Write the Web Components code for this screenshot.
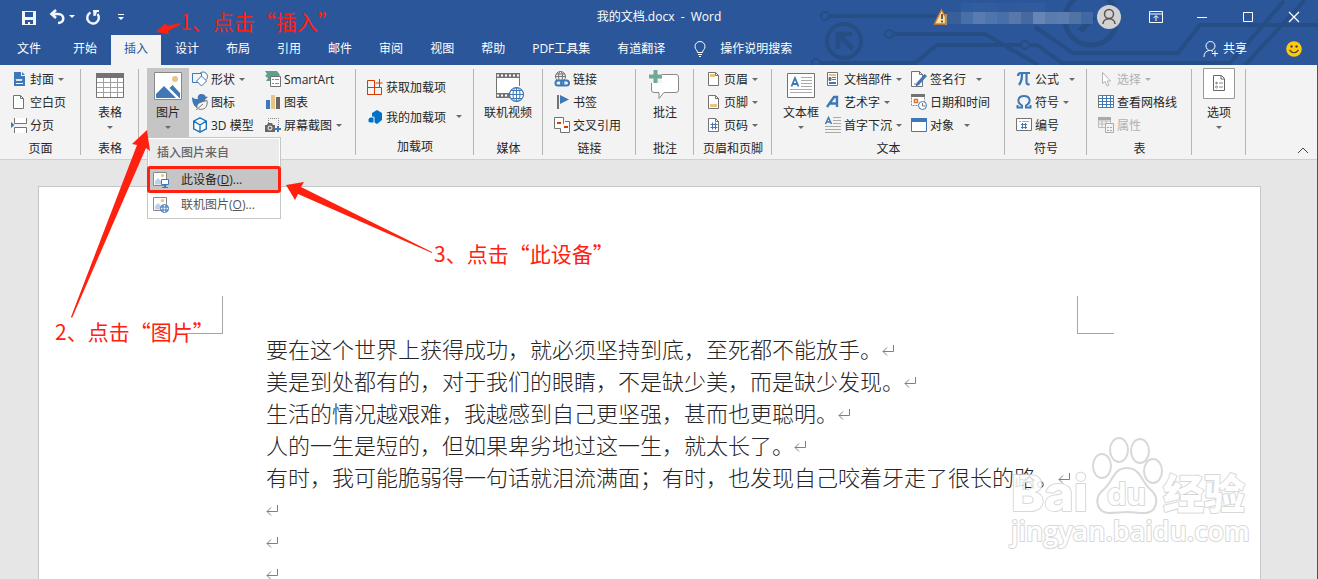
<!DOCTYPE html>
<html lang="zh-CN">
<head>
<meta charset="utf-8">
<title>我的文档.docx - Word</title>
<style>
    body {
        margin: 0;
        overflow: hidden;
        font: 12px/16px "Open Sans", "Noto Sans CJK SC", sans-serif;
        color: #262626;
    }
</style>
</head>
<body>
<word-window>
    <title-bar slot="title">我的文档.docx  -  Word</title-bar>
    <tab-strip slot="tabs" active="插入"></tab-strip>

    <ribbon-bar slot="ribbon">
        <ribbon-group label="页面" style="--width: 81px; --pad: 11px">
            <ribbon-column>
                <ribbon-button icon="cover" caret>封面</ribbon-button>
                <ribbon-button icon="blank">空白页</ribbon-button>
                <ribbon-button icon="break">分页</ribbon-button>
            </ribbon-column>
        </ribbon-group>
        <ribbon-group label="表格" style="--width: 58px">
            <ribbon-button large icon="table" caret>表格</ribbon-button>
        </ribbon-group>
        <ribbon-group style="--width: 217px">
            <ribbon-button large pressed icon="picture" caret>图片
                <picture-menu slot="menu"></picture-menu>
            </ribbon-button>
            <ribbon-column style="--column: 70px">
                <ribbon-button icon="shapes" caret>形状</ribbon-button>
                <ribbon-button icon="icons">图标</ribbon-button>
                <ribbon-button icon="cube">3D 模型</ribbon-button>
            </ribbon-column>
            <ribbon-column>
                <ribbon-button icon="smartart">SmartArt</ribbon-button>
                <ribbon-button icon="chart">图表</ribbon-button>
                <ribbon-button icon="screenshot" caret>屏幕截图</ribbon-button>
            </ribbon-column>
        </ribbon-group>
        <ribbon-group label="加载项" style="--width: 118px; --pad: 11px">
            <ribbon-column style="--row: 30px; --top: 4px">
                <ribbon-button icon="store">获取加载项</ribbon-button>
                <ribbon-button icon="addins" caret="far">我的加载项</ribbon-button>
            </ribbon-column>
        </ribbon-group>
        <ribbon-group label="媒体" style="--width: 69px; --pad: 10px">
            <ribbon-button large icon="video">联机视频</ribbon-button>
        </ribbon-group>
        <ribbon-group label="链接" style="--width: 93px; --pad: 11px">
            <ribbon-column>
                <ribbon-button icon="link">链接</ribbon-button>
                <ribbon-button icon="bookmark">书签</ribbon-button>
                <ribbon-button icon="crossref">交叉引用</ribbon-button>
            </ribbon-column>
        </ribbon-group>
        <ribbon-group label="批注" style="--width: 58px">
            <ribbon-button large icon="comment">批注</ribbon-button>
        </ribbon-group>
        <ribbon-group label="页眉和页脚" style="--width: 78px; --pad: 11px">
            <ribbon-column>
                <ribbon-button icon="header" caret>页眉</ribbon-button>
                <ribbon-button icon="footer" caret>页脚</ribbon-button>
                <ribbon-button icon="pagenum" caret>页码</ribbon-button>
            </ribbon-column>
        </ribbon-group>
        <ribbon-group label="文本" style="--width: 233px">
            <ribbon-button large icon="textbox" caret>文本框</ribbon-button>
            <ribbon-column style="--column: 83px">
                <ribbon-button icon="parts" caret>文档部件</ribbon-button>
                <ribbon-button icon="wordart" caret>艺术字</ribbon-button>
                <ribbon-button icon="dropcap" caret>首字下沉</ribbon-button>
            </ribbon-column>
            <ribbon-column>
                <ribbon-button icon="signature" caret="far">签名行</ribbon-button>
                <ribbon-button icon="datetime">日期和时间</ribbon-button>
                <ribbon-button icon="object" caret="far">对象</ribbon-button>
            </ribbon-column>
        </ribbon-group>
        <ribbon-group label="符号" style="--width: 82px; --pad: 11px">
            <ribbon-column>
                <ribbon-button icon="pi" caret="far">公式</ribbon-button>
                <ribbon-button icon="omega" caret>符号</ribbon-button>
                <ribbon-button icon="number">编号</ribbon-button>
            </ribbon-column>
        </ribbon-group>
        <ribbon-group label="表" style="--width: 105px; --pad: 11px">
            <ribbon-column>
                <ribbon-button icon="select" caret disabled>选择</ribbon-button>
                <ribbon-button icon="grid">查看网格线</ribbon-button>
                <ribbon-button icon="props" disabled>属性</ribbon-button>
            </ribbon-column>
        </ribbon-group>
        <ribbon-group style="--width: 54px; --pad: 6px">
            <ribbon-button large icon="options" caret>选项</ribbon-button>
        </ribbon-group>
    </ribbon-bar>

    <document-page slot="document">
        <p>要在这个世界上获得成功，就必须坚持到底，至死都不能放手。</p>
        <p>美是到处都有的，对于我们的眼睛，不是缺少美，而是缺少发现。</p>
        <p>生活的情况越艰难，我越感到自己更坚强，甚而也更聪明。</p>
        <p>人的一生是短的，但如果卑劣地过这一生，就太长了。</p>
        <p>有时，我可能脆弱得一句话就泪流满面；有时，也发现自己咬着牙走了很长的路。</p>
        <p></p>
        <p></p>
        <p></p>
    </document-page>
</word-window>
<site-watermark></site-watermark>
<callout-layer></callout-layer>

<script>
const BLUE = '#3f78b5';
const GRAY = '#737373';
const SAND = '#eac282';

const sheet = (inner) => `<path d="M3.5 1.5h7l3 3v10h-10z" fill="#fff" stroke="${GRAY}"/><path d="M10.5 1.5v3h3" fill="none" stroke="${GRAY}"/>${inner}`;
const photo = `<path d="M.5.5h13v13H.5z" fill="#fff" stroke="#8a8a8a"/><circle cx="9.500" cy="3.500" r="1.600" fill="${SAND}"/><path d="M2 12.500V9l3-3 3 3v3.500z" fill="#bcd0e6"/>`;

// [size, markup]
const ICONS = {
    cover: [16, `<path d="M3 1h7v4h4v10H3zM11 1l3 3h-3z" fill="${BLUE}"/><path d="M5 8l1 2 1-2 1 2 1-2 1 2 1-2M5 12.500h7" fill="none" stroke="#fff"/>`],
    blank: [16, `<path d="M2.500 1.500h7l3 3v10h-10z" fill="#fff" stroke="${GRAY}"/><path d="M9.500 1.500v3h3" fill="none" stroke="${GRAY}"/>`],
    break: [16, `<path d="M3.500 1v5.500h12V1M3.500 16v-5.500h12V16" fill="#fff" stroke="${GRAY}"/><path d="M0 5l3.500 3L0 11z" fill="${BLUE}"/>`],
    shapes: [16, `<circle cx="11" cy="5.500" r="4.500" fill="#fff" stroke="${BLUE}"/><path d="M.5 2.500h9v9h-9z" fill="#f3f3f3" stroke="${BLUE}"/><path d="M9.500 5l5 5-5 5-5-5z" fill="#fff" stroke="${BLUE}"/>`],
    icons: [16, `<path d="M0 3c2 2 4 2 6 2-1-3 1-5 3.500-5C12 0 13 1 13.500 2.500L16 3l-2.500 2c-.5 3-2.500 4-5 5l-3 4C2 13 0 8 0 3z" fill="${BLUE}"/><path d="M5 14c-1-5 4-6 10-7.500 1 6.500-2.500 10-8.500 8.500M4 16l7-6" fill="#f3f3f3" stroke="${GRAY}"/>`],
    cube: [16, '<path d="M8 .8l6.300 3.400v7.600L8 15.200l-6.300-3.400V4.200zM1.700 4.200L8 8l6.300-3.800M8 8v7" fill="#fff" stroke="#1a75bb" stroke-width="1.400"/>'],
    smartart: [16, `<path d="M0 0h12l3 4-2 2H6v4H1l2-3-3-2 2-2z" fill="#5fa08a"/><path d="M5.500 5.500h10v10h-10z" fill="#fff" stroke="${GRAY}"/><path d="M7 8.500h2m1 0h4M7 12.500h2m1 0h4" stroke="#8a8a8a"/>`],
    chart: [16, `<path d="M1 6h4v9H1z" fill="${BLUE}"/><path d="M6 1h4v14H6z" fill="${SAND}"/><path d="M11 3h4v12h-4z" fill="#666"/>`],
    screenshot: [16, `<path d="M3.500 6V1.500h10V9" fill="none" stroke="#888" stroke-dasharray="1 1"/><path d="M0 8h2l1-2h4l1 2h2v7H0z" fill="#666"/><circle cx="5" cy="11" r="2" fill="#666" stroke="#fff"/><path d="M13 9v6M10 12h6" stroke="${BLUE}" stroke-width="2"/>`],
    store: [16, '<path d="M.5 1.500h7v14h-7zM.5 8.500h14v7H.5z" fill="none" stroke="#d83b01"/><path d="M12.500 0v8M8.500 4h7" stroke="#d83b01"/>'],
    addins: [16, '<path d="M10 1l5 3v7l-5 4-5-3V4z" fill="#0072c6"/><path d="M3 8h4v6H3l-2-1v-3z" fill="#0072c6" stroke="#f3f3f3"/>'],
    link: [16, `<g fill="none" stroke="${GRAY}"><circle cx="6.500" cy="5.500" r="5"/><ellipse cx="6.500" cy="5.500" rx="2" ry="5"/><path d="M1 5.500h11M2 3h9"/></g><path d="M0 9h16v7H0z" fill="#f3f3f3"/><rect x="1.500" y="9.500" width="8" height="5" rx="2.500" fill="none" stroke="${BLUE}" stroke-width="2"/><rect x="7" y="9.500" width="8" height="5" rx="2.500" fill="none" stroke="${BLUE}" stroke-width="2"/>`],
    bookmark: [16, `<path d="M3 1h2v14H3z" fill="${GRAY}"/><path d="M6 1l9 4.500L6 10z" fill="${BLUE}"/>`],
    crossref: [16, `<path d="M.5.5h9v11h-9z" fill="#fff" stroke="${GRAY}"/><path d="M11 4.500h4.500v11h-9V12" fill="#fff" stroke="${GRAY}"/><path d="M3 5h4v2H3zM10 9h4v2h-4z" fill="#d83b01"/>`],
    header: [16, sheet(`<path d="M5 3h5v3H5z" fill="${SAND}"/>`)],
    footer: [16, sheet(`<path d="M5 10h7v3H5z" fill="${SAND}"/>`)],
    pagenum: [16, sheet(`<path d="M7.500 5.500v7M10.500 5.500v7M5.500 7.500h7M5.500 10.500h7" stroke="${BLUE}"/>`)],
    parts: [16, `<path d="M2.500 1.500h10v13h-10z" fill="#fff" stroke="${GRAY}"/><path d="M4 3h7v2H4z" fill="${SAND}"/><path d="M4 6.500h2v3H4zM7 6.500h4M7 8.500h4" fill="${GRAY}" stroke="${GRAY}"/><path d="M4 11h7v2H4z" fill="${BLUE}"/>`],
    wordart: [16, `<path d="M2 13L9 3h3v10M5 9.500h6" fill="none" stroke="${BLUE}" stroke-width="2.400"/>`],
    dropcap: [16, `<path d="M.5 7L3.500.5 6.500 7M2 5h3" fill="none" stroke="${BLUE}" stroke-width="1.500"/><path d="M8 .5h8M8 3.500h8M8 6.500h8M0 9.500h16M0 12.500h16M0 15.500h16" stroke="#aaa"/>`],
    signature: [16, `<path d="M.5.5h8l3 3v12H.5z" fill="#fff" stroke="${GRAY}"/><path d="M8.500.5v3h3M3 13h2" fill="none" stroke="${GRAY}"/><path d="M13.500 3l2.500 2-8 9-3.500 1.500L5.500 12z" fill="${BLUE}"/>`],
    datetime: [16, `<path d="M.5 1.500h13v10H.5z" fill="#fff" stroke="#888" stroke-dasharray="2 1"/><path d="M0 0h14v3H0z" fill="${GRAY}"/><path d="M3.500 5.500h3v3h-3z" fill="#fff" stroke="#d87431" stroke-width="1.500"/><circle cx="11.500" cy="11.500" r="4" fill="#fff" stroke="${BLUE}"/><path d="M11.500 9v3h3" fill="none" stroke="${GRAY}"/>`],
    object: [16, `<path d="M.5 1.500h15v13H.5z" fill="#fff" stroke="${BLUE}"/><path d="M0 1h16v4H0z" fill="${BLUE}"/>`],
    pi: [16, `<path d="M2 5c0-2 1-3 3-3h9M6 2c0 5 0 8-3 12M10.500 2v9c0 2 1 3 3 2" fill="none" stroke="${BLUE}" stroke-width="2.200"/>`],
    omega: [16, `<path d="M1.500 11v2.500h4.500V11.500C0 8 2 2 8 2s8 6 2 9.500v2h4.500V11" fill="none" stroke="${BLUE}" stroke-width="2"/>`],
    number: [16, `<path d="M.5 1.500h15v12H.5z" fill="#fff" stroke="${GRAY}"/><path d="M3 4.500h2M6 4.500h7" stroke="#aaa"/><path d="M6.500 6v6M9.500 6v6M5 7.500h6M5 10.500h6" stroke="${BLUE}"/>`],
    select: [16, '<path d="M4.500 1.500v11l2.500-2 2 4.500 2-1-2-4h3.500z" fill="#fff" stroke="#b5b0b5"/>'],
    grid: [16, `<path d="M.5 1.500h15v12H.5z" fill="#fff" stroke="${GRAY}"/><path d="M1 4.500h14M1 7.500h14M1 10.500h14M4.500 2v11M8.500 2v11M12.500 2v11" stroke="${BLUE}"/>`],
    props: [16, '<path d="M.5.500h12v10H.5zM0 4h13M0 7h13M4 2v9M8 2v9" fill="none" stroke="#bbb"/><path d="M0 0h13v3H0z" fill="#aaa"/><path d="M7.500 6.500h8v9h-8z" fill="#f3f3f3" stroke="#aaa"/><path d="M9 10.500h2m1 0h2M9 13.500h2m1 0h2" stroke="#b59fb5"/>'],
    device: [16, `${photo}<path d="M8.500 7.500h7v5h-7z" fill="#fff" stroke="${BLUE}"/><path d="M11 13h2v2h2v1H9v-1h2z" fill="${BLUE}"/>`],
    online: [16, `${photo}<circle cx="11.500" cy="11.500" r="4" fill="#fff" stroke="${BLUE}"/><path d="M7.500 10h8M7.500 13h8M10 8v7M13 8v7" stroke="${BLUE}"/>`],

    table: [32, `<path d="M2.500 3.500h27v24h-27z" fill="#fff" stroke="${GRAY}"/><path d="M2 3h28v5H2z" fill="${GRAY}"/><path d="M3 12.500h26M3 17.500h26M3 22.500h26M9.500 8v19M16.500 8v19M23.500 8v19" stroke="#a0a0a0"/>`],
    picture: [32, `<path d="M2.500 2.500h27v27h-27z" fill="#fff" stroke="#888"/><circle cx="23" cy="9" r="3" fill="${SAND}"/><path d="M4 28v-4l8-8 12 12zM17.500 18l3-3 7.500 8v5h-.5z" fill="${BLUE}"/>`],
    video: [32, `<path d="M4 4h24v24H4z" fill="#fff"/><path d="M4 3h24v5H4zM4 23h16v5H4z" fill="${GRAY}"/><path d="M5 5.500h23M5 25.500h14" stroke="#fff" stroke-width="2" stroke-dasharray="2 2"/><path d="M4.500 4v23M27.500 4v12" stroke="${GRAY}"/><circle cx="24.500" cy="24.500" r="7" fill="#fff" stroke="${BLUE}" stroke-width="1.200"/><path d="M17.500 24.500h14M24.500 17v15M19 20.500h11M19 28.500h11" stroke="${BLUE}"/><ellipse cx="24.500" cy="24.500" rx="3.500" ry="7" fill="none" stroke="${BLUE}"/>`],
    comment: [32, '<path d="M5 4.500h22q2.500 0 2.500 2.500v13q0 2.500-2.500 2.500H15l-5 6v-6H5Q2.500 22.500 2.500 20V7Q2.500 4.500 5 4.500z" fill="#fff" stroke="#888"/><path d="M0 0h13v13H0z" fill="#f3f3f3"/><path d="M6.500 0v13M0 6.500h13" stroke="#73a796" stroke-width="4"/>'],
    textbox: [32, `<path d="M2.500 3.500h27v24h-27z" fill="#fff" stroke="${GRAY}"/><path d="M6.500 16.500L10 8l3.500 8.500M8 14h4" fill="none" stroke="${BLUE}" stroke-width="1.800"/><path d="M16 7.500h11M16 10.500h11M16 13.500h11M16 16.500h11M5 19.500h22M5 22.500h22" stroke="#aaa"/>`],
    options: [32, '<path d="M.5-1.500h31v30H.5z" fill="#fff" stroke="#999"/><path d="M10.500 5.500h8l3 3v12h-11z" fill="#fff" stroke="#666"/><path d="M18 6v3h3" fill="none" stroke="#666"/><circle cx="13.500" cy="13" r="1.200" fill="#888"/><circle cx="13.500" cy="17" r="1" fill="none" stroke="#888"/><path d="M16 13h4M16 17h4" stroke="#888"/>'],

    save: [16, '<path d="M1 2h14v14H1z" fill="#f3f7fb"/><path d="M4 3h8v5H4zM4 11h8v4H9v-2H7v2H4z" fill="#2b579a"/>'],
    undo: [16, '<path d="M7 1L2.500 5 7 9M3 5h6c7 0 7 9 0 9" fill="none" stroke="#f3f7fb" stroke-width="2.600"/>'],
    redo: [16, '<path d="M5.500 3.500A5.800 5.800 0 1 0 12.500 5" fill="none" stroke="#f3f7fb" stroke-width="2.400"/><path d="M8 1h6v2h-2l-1.500 4h-2z" fill="#f3f7fb"/>'],
    customize: [16, '<path d="M5 5.500h6" stroke="#fff"/><path d="M5 8h6l-3 3z" fill="#fff"/>'],
    ribbonmode: [16, '<path d="M1.500 2.500h13v11h-13zM1.500 5h13M8 12V7M5.500 9L8 6.500 10.500 9" fill="none" stroke="#fff"/>'],
    minimize: [16, '<path d="M3 8.500h10" stroke="#fff"/>'],
    maximize: [16, '<path d="M3.500 3.500h9v9h-9z" fill="none" stroke="#fff"/>'],
    close: [16, '<path d="M3 3l10 10M13 3L3 13" stroke="#fff" stroke-width="1.200"/>'],
    bulb: [16, '<path d="M5.500 11.500C5.500 9 3 8.500 3 5.500a5 5 0 0 1 10 0c0 3-2.500 3.500-2.500 6zM6 13.500h4M7 15.500h2" fill="none" stroke="#fff"/>'],
    share: [16, '<circle cx="7.500" cy="5" r="4.500" fill="none" stroke="#fff"/><path d="M1 16c0-4 2-6 5-6.500M8 9.500l2 1M12 9.500v6M9 12.500h6" fill="none" stroke="#fff"/>'],
    smile: [16, '<circle cx="8" cy="8" r="7.800" fill="#ffc90e"/><circle cx="5.500" cy="5.500" r="1.200" fill="#444"/><circle cx="10.500" cy="5.500" r="1.200" fill="#444"/><path d="M3.500 9q4.500 5.500 9 0" fill="none" stroke="#444" stroke-width="1.200"/>'],
    warning: [16, '<path d="M7.500 1l4 7v7H.5z" fill="#fbe0a0" stroke="#e07b1c" stroke-width="1.300"/><path d="M8 5v5M8 11.500v2" stroke="#333" stroke-width="1.500"/><path d="M11 5h2v11h-2z" fill="#a59274"/>'],
    collapse: [16, '<path d="M3 10l5-5 5 5" fill="none" stroke="#444"/>'],
};

const svg = (name) => {
    const [size, body] = ICONS[name];
    return `<svg width="${size}" height="${size}" viewBox="0 0 ${size} ${size}" aria-hidden="true">${body}</svg>`;
};

const BUTTON_RESET = `
    button {
        margin: 0;
        padding: 0;
        border: 0;
        background: none;
        font: inherit;
        color: inherit;
    }
    svg { display: block; flex: none; overflow: visible; }
`;

class BaseElement extends HTMLElement {
    constructor () {
        super();
        this.attachShadow({ mode: 'open' });
    }

    connectedCallback () {
        this.shadowRoot.innerHTML = this.template();
    }
}

class WordWindow extends BaseElement {
    template () {
        return `
        <style>
            :host {
                display: flex;
                flex-direction: column;
                height: 100vh;
                box-sizing: border-box;
                border-right: 1px solid #2b579a;
                background: #e6e6e6;
            }
            header { position: relative; background: #2b579a; color: #fff; margin-right: -1px; }
            .circuit { position: absolute; right: 0; top: 0; }
            main { flex: 1; min-height: 0; overflow: hidden; }
        </style>
        <header>
            <svg class="circuit" width="538" height="65" fill="none" stroke="#264e85" stroke-width="4" aria-hidden="true">
                <circle cx="45" cy="16" r="4" stroke-width="2"/><path d="M50 16h106"/>
                <circle cx="64" cy="41" r="17"/><path d="M58 49V34h14M59 35l14 14" stroke-width="5"/>
                <circle cx="109" cy="34" r="4" stroke-width="2"/><path d="M114 34h91l53 31"/>
                <circle cx="36" cy="63" r="4" stroke-width="2"/><path d="M40 63h95l22-18h83"/>
                <circle cx="245" cy="45" r="4" stroke-width="2"/><path d="M250 45h7l25 18h168l54-62"/>
                <path d="M255 27l38 26h105l22-28h118M465 65l60-65"/>
                <circle cx="311" cy="19" r="26" stroke-width="5"/><path d="M300 31l14-14" stroke-width="6"/>
            </svg>
            <slot name="title"></slot>
            <slot name="tabs"></slot>
        </header>
        <slot name="ribbon"></slot>
        <main><slot name="document"></slot></main>
        `;
    }
}

class TitleBar extends BaseElement {
    template () {
        const top = ['#2f5b9f', '#315e9f', '#315d9f', '#2f5b9d', '#305a9a', '#315b99', '#305c9f'];
        const bottom = ['#496fa9', '#597bb0', '#4f75ad', '#476faa', '#5878ac', '#47699f', '#6886b5', '#5a7bae', '#5c7dae', '#5174a5', '#3f68a4'];
        return `
        <style>
            ${BUTTON_RESET}
            :host {
                position: relative;
                display: grid;
                grid-template-columns: 1fr auto 1fr;
                align-items: center;
                height: 34px;
            }
            .quick { display: flex; align-items: center; padding-left: 21px; }
            .quick button { display: flex; align-items: center; margin-right: 12px; }
            .quick .undo { gap: 4px; margin-right: 10px; }
            .title { white-space: pre; font-size: 12px; }
            .right { display: flex; align-items: center; justify-content: flex-end; }
            .account { display: flex; align-items: center; margin-right: 27px; }
            .avatar { border-radius: 50%; background: #d2d2d2; margin-left: -4px; }
            .controls { display: flex; gap: 30px; padding-right: 16px; }
        </style>
        <div class="quick">
            <button aria-label="保存">${svg('save')}</button>
            <button class="undo" aria-label="撤消">${svg('undo')}<svg width="6" height="4"><path d="M0 0h6L3 3z" fill="#fff"/></svg></button>
            <button aria-label="重复">${svg('redo')}</button>
            <button aria-label="自定义快速访问工具栏">${svg('customize')}</button>
        </div>
        <div class="title"><slot></slot></div>
        <div class="right">
            <div class="account">
                ${svg('warning')}
                <svg width="151" height="28" aria-hidden="true">
                    <path d="M-3 9h14v12H-3z" fill="#395f98"/>
                    ${top.map((c, i) => `<rect x="${11 + i * 12}" width="12" height="9" fill="${c}"/>`).join('')}
                    ${bottom.map((c, i) => `<rect x="${11 + i * 12}" y="9" width="12" height="12" fill="${c}"/>`).join('')}
                </svg>
                <svg class="avatar" width="24" height="24" fill="none" stroke="#555" stroke-width="1.500" aria-hidden="true">
                    <circle cx="12" cy="9" r="4.500"/><path d="M6 19c0-7 12-7 12 0"/>
                </svg>
            </div>
            <div class="controls">
                <button aria-label="功能区显示选项">${svg('ribbonmode')}</button>
                <button aria-label="最小化">${svg('minimize')}</button>
                <button aria-label="最大化">${svg('maximize')}</button>
                <button aria-label="关闭">${svg('close')}</button>
            </div>
        </div>
        `;
    }
}

class TabStrip extends BaseElement {
    template () {
        const tabs = ['文件', '开始', '插入', '设计', '布局', '引用', '邮件', '审阅', '视图', '帮助', 'PDF工具集', '有道翻译'];
        const active = this.getAttribute('active');
        return `
        <style>
            ${BUTTON_RESET}
            :host { position: relative; display: flex; height: 31px; }
            nav { display: flex; gap: 1px; padding-top: 1px; }
            nav button { padding: 0 13px 2px; white-space: nowrap; }
            nav button:first-child { padding: 0 18px 2px 17px; }
            nav .active { background: #f3f3f3; color: #2b579a; }
            label { display: flex; align-items: center; gap: 12px; margin-left: 14px; padding-bottom: 2px; }
            input {
                width: 96px;
                padding: 0;
                border: 0;
                outline: 0;
                background: none;
                font: inherit;
                color: #fff;
            }
            input::placeholder { color: #fff; opacity: 1; }
            .right { display: flex; align-items: center; gap: 39px; margin-left: auto; padding: 0 16px 2px 0; }
            .share { display: flex; align-items: center; gap: 4px; }
        </style>
        <nav>
            ${tabs.map((tab) => `<button class="${tab === active ? 'active' : ''}">${tab}</button>`).join('')}
        </nav>
        <label>${svg('bulb')}<input type="text" aria-label="操作说明搜索" placeholder="操作说明搜索"></label>
        <div class="right">
            <button class="share">${svg('share')}共享</button>
            <button aria-label="反馈">${svg('smile')}</button>
        </div>
        `;
    }
}

class RibbonBar extends BaseElement {
    template () {
        return `
        <style>
            ${BUTTON_RESET}
            :host {
                display: flex;
                flex: none;
                box-sizing: border-box;
                height: 95px;
                padding-top: 3px;
                background: #f3f3f3;
                border-bottom: 1px solid #d0d0d0;
            }
            button { align-self: flex-end; margin: 0 6px 0 auto; }
        </style>
        <slot></slot>
        <button aria-label="折叠功能区">${svg('collapse')}</button>
        `;
    }
}

class RibbonGroup extends BaseElement {
    template () {
        return `
        <style>
            :host {
                position: relative;
                display: flex;
                flex: none;
                flex-direction: column;
                box-sizing: border-box;
                width: var(--width);
            }
            :host::after {
                content: "";
                position: absolute;
                right: 0;
                top: 1px;
                bottom: 4px;
                width: 1px;
                background: #b5b5b5;
            }
            .body { display: flex; gap: 3px; height: 69px; padding-left: var(--pad, 8px); }
            .label { text-align: center; line-height: 24px; }
        </style>
        <div class="body"><slot></slot></div>
        <div class="label">${this.getAttribute('label') || ''}</div>
        `;
    }
}

class RibbonColumn extends BaseElement {
    template () {
        return `
        <style>
            :host {
                display: flex;
                flex-direction: column;
                box-sizing: border-box;
                width: var(--column, auto);
                padding-top: var(--top, 0);
            }
        </style>
        <slot></slot>
        `;
    }
}

class RibbonButton extends BaseElement {
    template () {
        const caret = this.hasAttribute('caret')
            ? '<svg class="caret" width="6" height="3"><path d="M0 0h6L3 3z" fill="currentColor"/></svg>'
            : '';
        return `
        <style>
            ${BUTTON_RESET}
            :host { position: relative; display: block; }
            button {
                display: flex;
                align-items: center;
                gap: 3px;
                height: var(--row, 23px);
                padding-bottom: 1px;
                white-space: nowrap;
            }
            .text { padding-top: 2px; }
            button:disabled { color: #b1b1b1; }
            .caret { margin-left: 1px; color: #6a6a6a; }
            button:disabled .caret { color: #b1b1b1; }
            :host([caret="far"]) .caret { margin-left: 7px; }
            :host([large]) button {
                flex-direction: column;
                gap: 0;
                min-width: 42px;
                height: 69px;
                padding: 2px 0 0;
            }
            :host([large]) .text { margin: 1px 0 5px; }
            :host([large]) .caret { margin: 0; }
            :host([pressed]) button { background: #c5c5c5; }
        </style>
        <button ${this.hasAttribute('disabled') ? 'disabled' : ''}>
            ${svg(this.getAttribute('icon'))}
            <span class="text"><slot></slot></span>
            ${caret}
        </button>
        <slot name="menu"></slot>
        `;
    }
}

class PictureMenu extends BaseElement {
    template () {
        return `
        <style>
            ${BUTTON_RESET}
            :host {
                position: absolute;
                z-index: 2;
                top: 69px;
                left: 0;
                box-sizing: border-box;
                width: 134px;
                height: 82px;
                border: 1px solid #c6c6c6;
                background: #fff;
            }
            .head {
                margin: 1px;
                padding: 6px 8px 5px;
                background: #ebebeb;
                color: #666;
                font-weight: 500;
            }
            button {
                display: flex;
                align-items: center;
                gap: 12px;
                width: 100%;
                height: 25px;
                padding-left: 5px;
                color: #555;
                white-space: nowrap;
            }
            .current {
                background: #c5c5c5;
                color: #262626;
                outline: 3px solid #ff2010;
                outline-offset: -2px;
                border-radius: 2px;
            }
        </style>
        <div class="head">插入图片来自</div>
        <button class="current">${svg('device')}<span>此设备(<u>D</u>)...</span></button>
        <button>${svg('online')}<span>联机图片(<u>O</u>)...</span></button>
        `;
    }
}

class DocumentPage extends BaseElement {
    connectedCallback () {
        super.connectedCallback();
        this.querySelectorAll('p').forEach((p) => {
            p.insertAdjacentHTML('beforeend', '<svg width="13" height="13" fill="none" stroke="#808080" aria-hidden="true"><path d="M11.500 0v6.500H1M5 2.500l-4 4 4 4"/></svg>');
        });
    }

    template () {
        return `
        <style>
            :host {
                display: block;
                margin: 26px 56px 0 38px;
                min-height: 600px;
                border: 1px solid #c6c6c6;
                background: #fff;
            }
            .marks { display: flex; justify-content: space-between; padding: 109px 146px 0 147px; }
            .marks i {
                box-sizing: border-box;
                width: 37px;
                height: 38px;
                border: solid #a6a6a6;
                border-width: 0 1px 1px 0;
            }
            .marks i:last-child { border-width: 0 0 1px 1px; }
            .text { margin-top: -2px; padding: 0 147px 0 227px; }
            ::slotted(p) {
                margin: 0;
                font: 22px/32px "Noto Sans CJK SC", sans-serif;
                font-weight: 300;
                white-space: nowrap;
            }
        </style>
        <div class="marks"><i></i><i></i></div>
        <div class="text"><slot></slot></div>
        `;
    }
}

class SiteWatermark extends BaseElement {
    template () {
        return `
        <style>
            :host { position: absolute; right: 66px; bottom: 24px; opacity: .85; }
            svg { display: block; }
            text { paint-order: stroke; stroke-linejoin: round; }
        </style>
        <svg width="246" height="122" fill="#fff" stroke="#d2d2d2" stroke-width="2">
            <text x="5" y="78" font-family="Inter" font-weight="800" font-size="50">Bai</text>
            <ellipse cx="96" cy="33" rx="9" ry="12"/>
            <ellipse cx="113" cy="17" rx="9" ry="12"/>
            <ellipse cx="134" cy="18" rx="9" ry="12"/>
            <ellipse cx="147" cy="38" rx="9" ry="12"/>
            <path d="M121 35c14 0 14 14 24 22 9 8 6 23-7 23-8 0-10-1-17-1s-10 1-17 1c-13 0-17-14-7-23 10-8 10-22 24-22z"/>
            <text x="101" y="72" font-family="Inter" font-weight="700" font-size="31">du</text>
            <text x="157" y="76" font-family="Noto Sans CJK SC" font-weight="900" font-size="41">经验</text>
            <text x="5" y="108" font-family="Open Sans" font-weight="600" font-size="27">jingyan.baidu.com</text>
        </svg>
        `;
    }
}

class CalloutLayer extends BaseElement {
    template () {
        return `
        <style>
            :host {
                position: absolute;
                z-index: 3;
                inset: 0;
                pointer-events: none;
                color: #ff2010;
                font: 21px/28px "Noto Sans CJK SC", sans-serif;
                white-space: nowrap;
            }
            svg { position: absolute; inset: 0; }
            span { position: absolute; }
            .first { left: 180px; top: 7px; }
            .second { left: 55px; top: 317px; }
            .third { left: 434px; top: 239px; }
        </style>
        <svg width="100%" height="100%" fill="#ff2010" aria-hidden="true">
            <path d="M156 32l10-9 1 3 13-3v2l-12 6 1 3z"/>
            <path d="M147 130l-15 14 5 1-66 172 1 1 74-170 4 3z"/>
            <path d="M286 185l18-3-3 5 131 65v1l-134-59-3 6z"/>
        </svg>
        <span class="first">1、点击“插入”</span>
        <span class="second">2、点击“图片”</span>
        <span class="third">3、点击“此设备”</span>
        `;
    }
}

customElements.define('word-window', WordWindow);
customElements.define('title-bar', TitleBar);
customElements.define('tab-strip', TabStrip);
customElements.define('ribbon-bar', RibbonBar);
customElements.define('ribbon-group', RibbonGroup);
customElements.define('ribbon-column', RibbonColumn);
customElements.define('ribbon-button', RibbonButton);
customElements.define('picture-menu', PictureMenu);
customElements.define('document-page', DocumentPage);
customElements.define('site-watermark', SiteWatermark);
customElements.define('callout-layer', CalloutLayer);
</script>
</body>
</html>
